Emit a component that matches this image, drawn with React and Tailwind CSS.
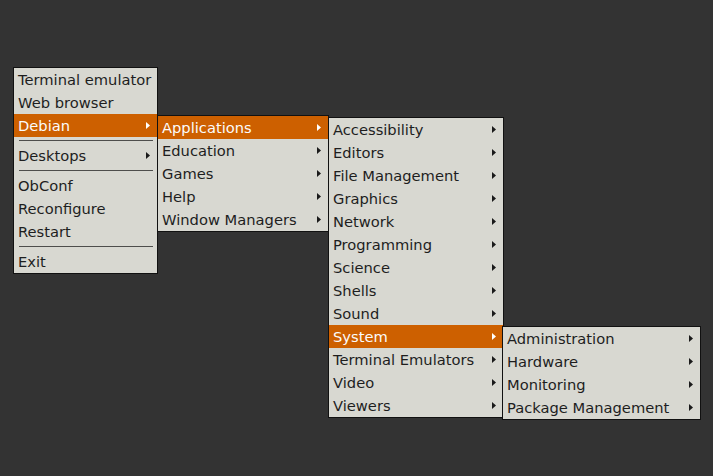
import React from "react";

const Arrow = ({ light }) => (
  <svg width="4" height="7" viewBox="0 0 4 7" className="shrink-0">
    <path d="M0 0 L4 3.5 L0 7 Z" fill={light ? "#ffffff" : "#1a1a1a"} />
  </svg>
);

const Item = ({ label, sub, active }) => (
  <div
    className={
      "flex h-[23px] items-center justify-between pl-[4px] pr-[7px] whitespace-nowrap " +
      (active ? "bg-[#cd6000] text-[#fbfbfb]" : "text-[#1e1e1e]")
    }
  >
    <span className="pt-[2px] leading-none">{label}</span>
    {sub ? <Arrow light={active} /> : null}
  </div>
);

const Sep = () => (
  <div className="flex h-[7px] items-center pl-[5px] pr-[4px]">
    <div className="h-px w-full bg-[#4e4e4c]" />
  </div>
);

const Menu = ({ className, children }) => (
  <div
    className={
      "absolute flex flex-col border border-[#111111] bg-[#d8d8d1] " + className
    }
  >
    {children}
  </div>
);

export default function App() {
  return (
    <div
      className="relative h-[476px] w-[713px] overflow-hidden bg-[#333333] text-[14.7px]"
      style={{ fontFamily: '"DejaVu Sans", sans-serif' }}
    >
      <Menu className="left-[13px] top-[67px] w-[145px]">
        <Item label="Terminal emulator" />
        <Item label="Web browser" />
        <Item label="Debian" sub active />
        <Sep />
        <Item label="Desktops" sub />
        <Sep />
        <Item label="ObConf" />
        <Item label="Reconfigure" />
        <Item label="Restart" />
        <Sep />
        <Item label="Exit" />
      </Menu>
      <Menu className="left-[157px] top-[115px] w-[172px]">
        <Item label="Applications" sub active />
        <Item label="Education" sub />
        <Item label="Games" sub />
        <Item label="Help" sub />
        <Item label="Window Managers" sub />
      </Menu>
      <Menu className="left-[328px] top-[117px] w-[176px]">
        <Item label="Accessibility" sub />
        <Item label="Editors" sub />
        <Item label="File Management" sub />
        <Item label="Graphics" sub />
        <Item label="Network" sub />
        <Item label="Programming" sub />
        <Item label="Science" sub />
        <Item label="Shells" sub />
        <Item label="Sound" sub />
        <Item label="System" sub active />
        <Item label="Terminal Emulators" sub />
        <Item label="Video" sub />
        <Item label="Viewers" sub />
      </Menu>
      <Menu className="left-[502px] top-[326px] w-[199px]">
        <Item label="Administration" sub />
        <Item label="Hardware" sub />
        <Item label="Monitoring" sub />
        <Item label="Package Management" sub />
      </Menu>
    </div>
  );
}
